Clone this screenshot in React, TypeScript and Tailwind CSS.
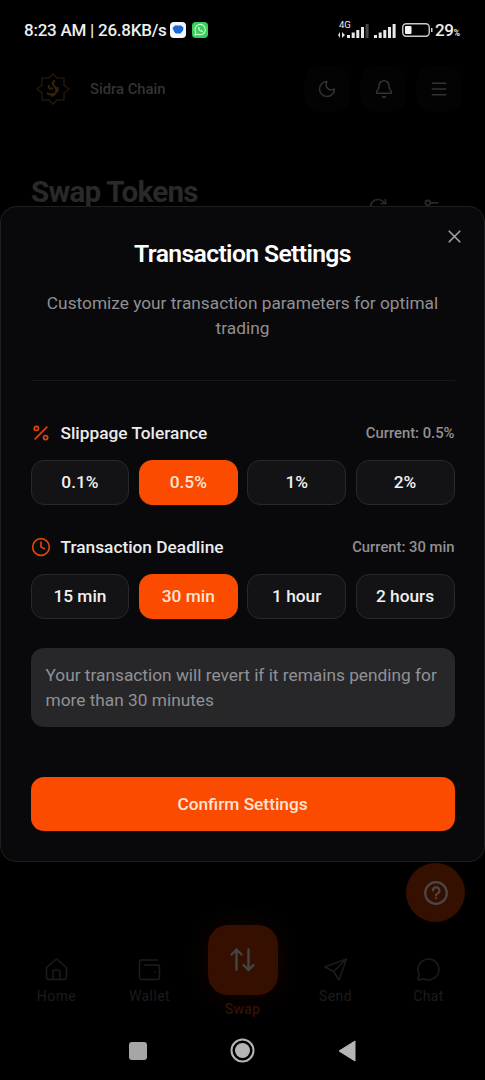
import type React from "react"
import { Bell, Clock, Menu, MessageCircle, Moon, Percent, RotateCw, Settings2, X } from "lucide-react"
import { clsx } from "clsx"

interface OptionGroupProps {
  title: string
  icon: React.ReactNode
  current: string
  options: string[]
}

function OptionGroup({ title, icon, current, options }: OptionGroupProps) {
  return (
    <section>
      <div className="flex h-6 items-center justify-between">
        <div className="flex items-center gap-[10px]">
          {icon}
          <h3 className="pt-px text-[17.3px] font-medium text-[#ececec]">{title}</h3>
        </div>
        <span className="text-[14.8px] font-medium text-[#919194]">Current: {current}</span>
      </div>
      <div className="mt-[15px] grid grid-cols-4 gap-[9.5px]">
        {options.map((option) => (
          <button
            key={option}
            className={clsx(
              "h-[45px] rounded-[13px] border text-[17.3px] font-medium",
              option === current ? "border-[#fa4b00] bg-[#fa4b00] text-[#ffe4d5]" : "border-[#29292c] bg-[#131315] text-[#f0f0f0]",
            )}
          >
            {option}
          </button>
        ))}
      </div>
    </section>
  )
}

function SettingsDialog() {
  return (
    <div className="absolute inset-x-0 top-[206px] h-[656px] rounded-[16px] border border-[#1f1f21] bg-[#09090b] px-[29.5px] text-center">
      <button className="absolute right-[19px] top-[19px] text-[#a3a3a5]" aria-label="Close">
        <X size={21} strokeWidth={1.9} />
      </button>
      <h2 className="mt-[31px] text-[24.7px] font-semibold leading-8 tracking-[-0.62px] text-white">Transaction Settings</h2>
      <p className="mt-[21px] px-3 text-[17.3px] leading-[25px] text-[#909093]">
        Customize your transaction parameters for optimal trading
      </p>
      <div className="mt-[39px] h-px bg-[#1a1a1c]" />
      <div className="mt-10 flex flex-col gap-[30px] text-left">
        <OptionGroup
          title="Slippage Tolerance"
          icon={<Percent size={20} strokeWidth={2} className="text-[#dc4607]" />}
          current="0.5%"
          options={["0.1%", "0.5%", "1%", "2%"]}
        />
        <OptionGroup
          title="Transaction Deadline"
          icon={<Clock size={20} strokeWidth={2} className="text-[#dc4607]" />}
          current="30 min"
          options={["15 min", "30 min", "1 hour", "2 hours"]}
        />
        <p className="-mt-px h-[79px] rounded-[13px] bg-[#27272a] px-[15px] pt-[15px] text-[17.3px] leading-[25px] text-[#919194]">
          Your transaction will revert if it remains pending for more than 30 minutes
        </p>
      </div>
      <button className="mt-[50px] h-[54px] w-full rounded-[13px] bg-[#fa4b00] pt-px text-[17.3px] font-medium text-[#ffe4d5]">
        Confirm Settings
      </button>
    </div>
  )
}

function SignalBars({ dimLast = false }: { dimLast?: boolean }) {
  return (
    <svg width="22" height="14" viewBox="0 0 22 14" fill="#e8e8e8">
      <rect x="0" y="11" width="3" height="3" />
      <rect x="4.7" y="8.5" width="3" height="5.5" />
      <rect x="9.3" y="6" width="3" height="8" />
      <rect x="14" y="3" width="3" height="11" />
      <rect x="18.6" y="0" width="3" height="14" opacity={dimLast ? 0.3 : 1} />
    </svg>
  )
}

function StatusBar() {
  return (
    <div className="flex h-[60px] items-center justify-between pl-6 pr-[25px] pt-[2px] text-[#eeeeee]">
      <div className="flex items-center">
        <span className="w-[143px] whitespace-nowrap text-[17px] font-medium tracking-[-0.25px]">8:23 AM | 26.8KB/s</span>
        <svg className="mb-[2px] ml-[3px]" width="16" height="16" viewBox="0 0 16 16">
          <rect width="16" height="16" rx="4" fill="#f4f7fc" />
          <path d="M5 3.5h6l2.5 2-.5 3-2.5 3h-5L3.8 9 2.5 6z" fill="#1e65d8" />
        </svg>
        <svg className="mb-[2px] ml-[6px]" width="16" height="16" viewBox="0 0 16 16" fill="none">
          <rect width="16" height="16" rx="4" fill="#36cf58" />
          <path d="m3 13 .8-2.6A5.2 5.2 0 1 1 6 12.3Z" stroke="#d8f8df" strokeWidth="1.1" />
          <path d="M6 5.2c-.5 2.2 2.2 5 4.5 4.7l.5-1-1.4-.8-.8.6-1.5-1.5.5-.7-.7-1.5Z" fill="#d8f8df" />
        </svg>
      </div>
      <div className="flex items-center">
        <div className="relative h-4 w-[8px]">
          <span className="absolute -top-[3px] left-0 text-[9.5px] leading-[10px]">4G</span>
          <svg className="absolute -left-px top-[9px]" width="8" height="6" viewBox="0 0 8 6" fill="#ddd">
            <path d="M0 3 2 0v6zM4 0l3 3-3 3z" />
          </svg>
        </div>
        <SignalBars dimLast />
        <span className="w-[5px]" />
        <SignalBars />
        <svg className="mb-[2px] ml-[6px]" width="31" height="14" viewBox="0 0 31 14" fill="none">
          <rect x=".75" y=".75" width="26.5" height="12.5" rx="3.5" stroke="#c9c9c9" strokeWidth="1.4" />
          <rect x="3" y="3" width="6.5" height="8" rx="1" fill="#f4f4f4" />
          <path d="M29 5v4h1.500V5z" fill="#d0d0d0" />
        </svg>
        <span className="ml-[2px] text-[17px] font-medium tracking-[-0.3px]">29</span>
        <span className="mt-[5px] text-[8.5px] font-bold">%</span>
      </div>
    </div>
  )
}

function Logo() {
  return (
    <svg width="36" height="36" viewBox="0 0 36 36" fill="none">
      <path d="m18 3 4 4h7v7l5 4-5 4v7h-7l-4 4-4-4H7v-7l-5-4 5-4V7h7Z" stroke="#211507" strokeWidth="1.6" />
      <path d="M20 10c-4 1-2 4 0 6 3 3 1 8-4 9M14 14c-1 3 1 5 4 3M12 22c2 2 5 2 6 0M22.500 16v5" stroke="#352407" strokeWidth="2" />
    </svg>
  )
}

function HeaderButton({ children }: { children: React.ReactNode }) {
  return <button className="flex size-[44px] items-center justify-center rounded-[12px] border border-[#050505] bg-[#030303]">{children}</button>
}

function Header() {
  return (
    <header className="flex h-[58px] items-center pl-[35px] pr-[24px] text-[#333]">
      <Logo />
      <span className="ml-[19px] text-[14.8px] font-medium">Sidra Chain</span>
      <div className="ml-auto flex gap-[12px]">
        <HeaderButton><Moon size={20} strokeWidth={1.8} /></HeaderButton>
        <HeaderButton><Bell size={20} strokeWidth={1.8} className="ml-[2px]" /></HeaderButton>
        <HeaderButton><Menu size={20} strokeWidth={1.8} /></HeaderButton>
      </div>
    </header>
  )
}

function NavIcon({ children }: { children: React.ReactNode }) {
  return (
    <svg width="25" height="25" viewBox="0 0 25 25" fill="none" stroke="currentColor" strokeWidth="1.5" strokeLinecap="round" strokeLinejoin="round">
      {children}
    </svg>
  )
}

function NavItem({ icon, label }: { icon: React.ReactNode; label: string }) {
  return (
    <div className="flex w-[93px] flex-col items-center pt-[32px] text-[#1c1c1c]">
      {icon}
      <span className="mt-[4px] text-[14px] leading-5 tracking-[0.4px]">{label}</span>
    </div>
  )
}

function BottomNav() {
  return (
    <nav className="flex h-[98px] justify-center">
      <NavItem
        label="Home"
        icon={
          <NavIcon>
            <path d="M2.500 10.500 12.500 2l10 8.500V20a2.500 2.500 0 0 1-2.500 2.500H5A2.500 2.500 0 0 1 2.500 20ZM9 22.500V15a2 2 0 0 1 2-2h3a2 2 0 0 1 2 2v7.500" />
          </NavIcon>
        }
      />
      <NavItem
        label="Wallet"
        icon={
          <NavIcon>
            <path d="M20.500 3H4a1.500 1.500 0 0 0-1.500 1.500V21A1.500 1.500 0 0 0 4 22.500h17a1.500 1.500 0 0 0 1.500-1.500V9.500A1.500 1.500 0 0 0 21 8H7.500M18 15h.01" />
          </NavIcon>
        }
      />
      <div className="flex w-[93px] flex-col items-center">
        <div className="flex size-[70px] items-center justify-center rounded-[20px] bg-[#350f00] text-[#444] shadow-[0_0_28px_#140500]">
          <svg width="30" height="30" viewBox="0 0 30 30" fill="none" stroke="currentColor" strokeWidth="2.400" strokeLinecap="round" strokeLinejoin="round">
            <path d="M8.500 24.500V4.500M3.500 9.500l5-5 5 5M20.500 4.500v20.500M15.500 20l5 5 5-5" />
          </svg>
        </div>
        <span className="mt-[4px] text-[14px] font-medium leading-5 tracking-[0.3px] text-[#331004]">Swap</span>
      </div>
      <NavItem
        label="Send"
        icon={
          <NavIcon>
            <path d="M23.500 2 2 10l8.500 4.500L16 23ZM23.500 2 10.500 14.500" />
          </NavIcon>
        }
      />
      <NavItem label="Chat" icon={<MessageCircle size={25} strokeWidth={1.5} />} />
    </nav>
  )
}

function SystemNav() {
  return (
    <div className="flex h-[57px] items-center justify-center pb-[2px] pr-px">
      <span className="size-[18px] rounded-[3px] bg-[#a6a6a6]" />
      <svg className="mx-[83px]" width="25" height="25" viewBox="0 0 25 25" fill="none">
        <circle cx="12.5" cy="12.5" r="11" stroke="#b5b5b5" strokeWidth="2" />
        <circle cx="12.5" cy="12.5" r="7.5" fill="#b5b5b5" />
      </svg>
      <svg width="18" height="22" viewBox="0 0 18 22" fill="#b5b5b5">
        <path d="M17 1v20L1 11z" stroke="#b5b5b5" strokeLinejoin="round" />
      </svg>
    </div>
  )
}

export default function App() {
  return (
    <main className="relative flex h-[1080px] w-[485px] flex-col overflow-hidden bg-black font-[Roboto,sans-serif]">
      <StatusBar />
      <Header />
      <div className="mt-[54px] flex justify-between pl-[31px] pr-[43px] text-[#292929]">
        <h1 className="text-[29.6px] font-bold leading-10 tracking-[-0.74px]">Swap Tokens</h1>
        <div className="flex gap-[34px] pt-[25px]">
          <RotateCw size={20} strokeWidth={2} />
          <Settings2 size={20} strokeWidth={2} />
        </div>
      </div>
      <div className="mt-auto">
        <div className="mb-[3px] ml-auto mr-[20px] flex size-[59px] items-center justify-center rounded-full bg-[#351000] text-[#4b4645]">
          <svg width="26" height="26" viewBox="0 0 26 26" fill="none" stroke="currentColor" strokeWidth="2.200" strokeLinecap="round">
            <circle cx="13" cy="13" r="10.800" />
            <path d="M10 10.500a3.200 3.200 0 1 1 4.600 2.900c-1.100.6-1.600 1-1.600 1.900M13 18.200h.01" />
          </svg>
        </div>
        <BottomNav />
        <SystemNav />
      </div>
      <SettingsDialog />
    </main>
  )
}
